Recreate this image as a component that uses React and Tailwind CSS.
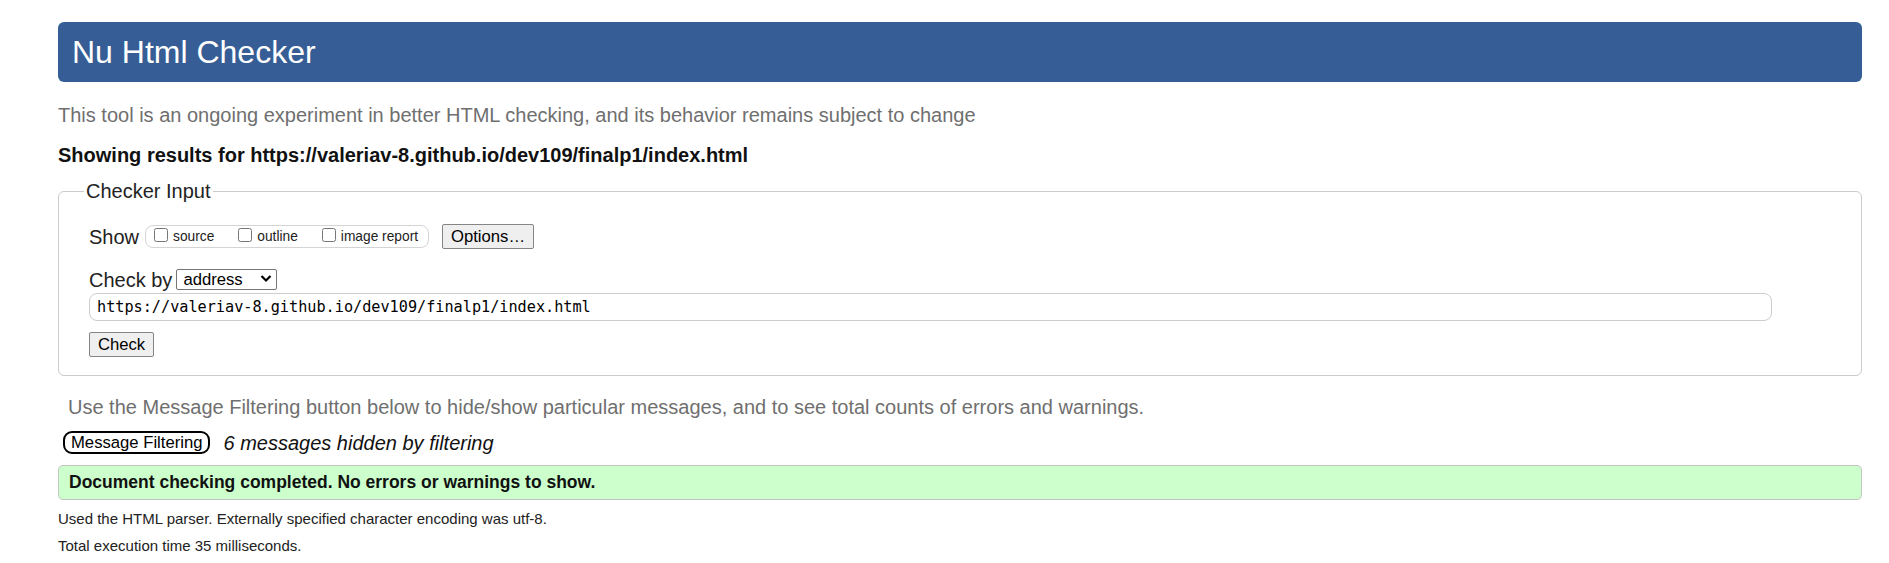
import React, { useState } from "react";

const SANS = { fontFamily: '"Liberation Sans", Arial, sans-serif' };

function ShowOption({ label, checked, onChange }) {
  return (
    <label className="flex items-center gap-[5px] cursor-pointer">
      <input
        type="checkbox"
        checked={checked}
        onChange={onChange}
        className="w-[14px] h-[14px] m-0 mb-[4px] accent-[#0075ff]"
      />
      <span className="text-[13.75px] leading-[16px] text-[#222]">{label}</span>
    </label>
  );
}

export default function App() {
  const [opts, setOpts] = useState({ source: false, outline: false, image: false });
  const [checkBy, setCheckBy] = useState("address");
  const [url, setUrl] = useState("https://valeriav-8.github.io/dev109/finalp1/index.html");

  const toggle = (key) => setOpts((o) => ({ ...o, [key]: !o[key] }));

  return (
    <div className="bg-white min-h-[563px] pl-[58px] pr-[27px] pt-[22px] text-black" style={SANS}>
      {/* Title bar */}
      <div className="h-[60px] flex items-center rounded-[6px] bg-[#365d95] pl-[14px]">
        <h1 className="text-[32px] leading-[37px] text-white font-normal">Nu Html Checker</h1>
      </div>

      <p className="mt-[21px] text-[20px] leading-[24px] text-[#6f6f6f]">
        This tool is an ongoing experiment in better HTML checking, and its behavior remains subject to change
      </p>

      <p className="mt-[16px] text-[20px] leading-[24px] font-bold text-[#111]">
        Showing results for https://valeriav-8.github.io/dev109/finalp1/index.html
      </p>

      {/* Checker input */}
      <fieldset className="mt-[12px] border border-[#cbcbcb] rounded-[6px] pl-[30px] pr-[30px] pt-[21px] pb-[18px]">
        <legend className="ml-[-5px] px-[2px] text-[20px] leading-[24px] text-[#222]">Checker Input</legend>

        <div className="flex items-center h-[25px]">
          <span className="text-[20px] leading-[24px] text-[#222]">Show</span>
          <div className="ml-[6px] w-[284px] h-[23px] flex items-center gap-[24px] px-[8px] border border-[#d4d4d4] rounded-[8px]">
            <ShowOption label="source" checked={opts.source} onChange={() => toggle("source")} />
            <ShowOption label="outline" checked={opts.outline} onChange={() => toggle("outline")} />
            <ShowOption label="image report" checked={opts.image} onChange={() => toggle("image")} />
          </div>
          <button className="ml-[13px] w-[92px] h-[25px] bg-[#efefef] border border-[#858585] rounded-[2px] text-[16.67px] leading-[20px] text-black cursor-pointer">
            Options…
          </button>
        </div>

        <div className="flex items-center mt-[20px] h-[21px]">
          <span className="text-[20px] leading-[24px] text-[#222]">Check by</span>
          <div className="relative ml-[4px]">
            <select
              value={checkBy}
              onChange={(e) => setCheckBy(e.target.value)}
              className="appearance-none w-[101px] h-[21px] pl-[6px] bg-white border border-[#767676] rounded-[2px] text-[16.67px] leading-[19px] text-black cursor-pointer"
            >
              <option value="address">address</option>
              <option value="file">file upload</option>
              <option value="text">text input</option>
            </select>
            <svg
              className="absolute right-[5px] top-[6px] pointer-events-none"
              width="12"
              height="9"
              viewBox="0 0 12 9"
              fill="none"
            >
              <path d="M1.5 2L6 6.5L10.5 2" stroke="#000" strokeWidth="2.2" />
            </svg>
          </div>
        </div>

        <input
          type="text"
          value={url}
          onChange={(e) => setUrl(e.target.value)}
          className="block mt-[3px] w-[1683px] h-[28px] px-[7px] border border-[#cdcdcd] rounded-[8px] text-[15.2px] text-black outline-none"
          style={{ fontFamily: '"DejaVu Sans Mono", "Liberation Mono", monospace' }}
        />

        <button className="block mt-[11px] w-[65px] h-[25px] bg-[#efefef] border border-[#858585] rounded-[2px] text-[16.67px] leading-[20px] text-black cursor-pointer">
          Check
        </button>
      </fieldset>

      <p className="mt-[19px] pl-[10px] text-[20px] leading-[24px] text-[#6f6f6f]">
        Use the Message Filtering button below to hide/show particular messages, and to see total counts of errors and warnings.
      </p>

      <div className="mt-[12px] flex items-center h-[23px] pl-[5px]">
        <button className="h-[23px] px-[6px] border-2 border-black rounded-[9px] bg-white text-[16.67px] leading-[18px] text-black cursor-pointer">
          Message Filtering
        </button>
        <span className="ml-[13px] text-[20px] leading-[24px] italic text-[#111]">6 messages hidden by filtering</span>
      </div>

      <div className="mt-[11px] h-[35px] flex items-center pl-[10px] bg-[#ccffcc] border border-[#c3c3c3] rounded-[5px]">
        <p className="text-[17.5px] leading-[21px] font-bold text-[#111]">
          Document checking completed. No errors or warnings to show.
        </p>
      </div>

      <p className="mt-[10px] text-[15px] leading-[18px] text-[#222]">
        Used the HTML parser. Externally specified character encoding was utf-8.
      </p>
      <p className="mt-[9px] text-[15px] leading-[18px] text-[#222]">Total execution time 35 milliseconds.</p>
    </div>
  );
}
